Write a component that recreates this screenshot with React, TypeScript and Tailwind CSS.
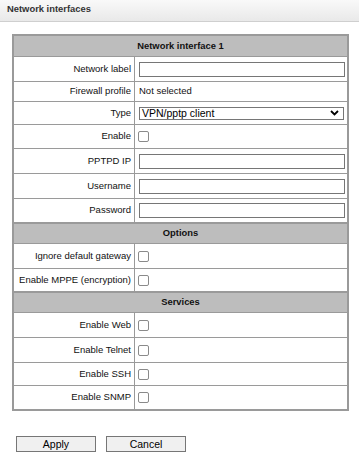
type Row =
  | { kind: "head"; title: string; h: string }
  | { kind: "input"; label: string; h: string }
  | { kind: "text"; label: string; value: string; h: string }
  | { kind: "select"; label: string; value: string; h: string }
  | { kind: "check"; label: string; h: string };

const rows: Row[] = [
  { kind: "head", title: "Network interface 1", h: "h-[20px]" },
  { kind: "input", label: "Network label", h: "h-[25px]" },
  { kind: "text", label: "Firewall profile", value: "Not selected", h: "h-[20px]" },
  { kind: "select", label: "Type", value: "VPN/pptp client", h: "h-[23px]" },
  { kind: "check", label: "Enable", h: "h-[24px]" },
  { kind: "input", label: "PPTPD IP", h: "h-[25px]" },
  { kind: "input", label: "Username", h: "h-[25px]" },
  { kind: "input", label: "Password", h: "h-[24px]" },
  { kind: "head", title: "Options", h: "h-[21px]" },
  { kind: "check", label: "Ignore default gateway", h: "h-[25px]" },
  { kind: "check", label: "Enable MPPE (encryption)", h: "h-[23px]" },
  { kind: "head", title: "Services", h: "h-[21px]" },
  { kind: "check", label: "Enable Web", h: "h-[25px]" },
  { kind: "check", label: "Enable Telnet", h: "h-[25px]" },
  { kind: "check", label: "Enable SSH", h: "h-[23px]" },
  { kind: "check", label: "Enable SNMP", h: "h-[24px]" },
];

const Checkbox = () => (
  <span className="ml-[3px] block w-[11px] h-[11px] rounded-[2px] border border-[#8a8a8a] bg-white" />
);

const Value = ({ row }: { row: Row }) => {
  if (row.kind === "input")
    return <div className="ml-[4px] w-[206px] h-[15px] border border-[#767676] bg-white" />;
  if (row.kind === "text")
    return <span className="ml-[4px] text-[9.5px] text-[#111]">{row.value}</span>;
  if (row.kind === "select")
    return (
      <div className="ml-[4px] w-[205px] h-[13px] border border-[#767676] bg-white flex items-center justify-between pl-[2px] pr-[4px]">
        <span className="text-[10.5px] leading-none text-black">{row.value}</span>
        <svg width="9" height="6" viewBox="0 0 9 6">
          <path d="M1 1 L4.5 4.5 L8 1" fill="none" stroke="#000" strokeWidth="1.8" />
        </svg>
      </div>
    );
  return <Checkbox />;
};

export default function App() {
  return (
    <div className="w-[359px] h-[465px] bg-white" style={{ fontFamily: '"Liberation Sans", Arial, sans-serif' }}>
      <div className="h-[22px] bg-gradient-to-b from-[#f9f9f9] to-[#e9e9e9] border-b border-[#cfcfcf] flex items-center pl-[7px] pb-[2px]">
        <span className="text-[9.4px] font-bold text-[#333]">Network interfaces</span>
      </div>
      <div className="ml-[12px] mt-[12px] w-[337px] border-2 border-[#9a9a9a]">
        {rows.map((row, i) =>
          row.kind === "head" ? (
            <div
              key={i}
              className={`${row.h} bg-[#bdbdbd] flex items-center justify-center text-[9.4px] font-bold text-[#111] ${i > 0 ? "border-t-2 border-[#9a9a9a]" : ""}`}
            >
              {row.title}
            </div>
          ) : (
            <div key={i} className={`${row.h} flex border-t border-[#9a9a9a]`}>
              <div className="w-[121px] border-r border-[#9a9a9a] flex items-center justify-end pr-[3px] text-[9.5px] text-[#111] whitespace-nowrap">
                {row.label}
              </div>
              <div className="flex-1 flex items-center">
                <Value row={row} />
              </div>
            </div>
          )
        )}
      </div>
      <div className="flex gap-[10px] ml-[16px] mt-[25px]">
        <button className="w-[80px] h-[16px] bg-[#f0f0f0] border border-[#767676] text-[10.5px] leading-none text-black">
          Apply
        </button>
        <button className="w-[80px] h-[16px] bg-[#f0f0f0] border border-[#767676] text-[10.5px] leading-none text-black">
          Cancel
        </button>
      </div>
    </div>
  );
}
